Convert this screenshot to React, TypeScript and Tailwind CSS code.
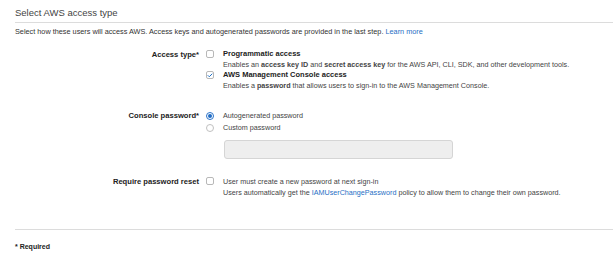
import { Check } from "lucide-react";

const font = { fontFamily: '"Liberation Sans", Arial, sans-serif' };

const CheckBox = ({ checked }: { checked?: boolean }) => (
  <div className="mt-[1px] flex h-[8px] w-[8px] shrink-0 items-center justify-center rounded-[2px] border border-[#b8b8b8] bg-white">
    {checked && <Check className="h-[7px] w-[7px] text-[#1f6fc5]" strokeWidth={4} />}
  </div>
);

const Radio = ({ checked }: { checked?: boolean }) => (
  <div
    className={`flex h-[8px] w-[8px] shrink-0 items-center justify-center rounded-full border ${
      checked ? "border-[#2a73c9]" : "border-[#c0c0c0]"
    } bg-white`}
  >
    {checked && <div className="h-[4px] w-[4px] rounded-full bg-[#1e6bc4]" />}
  </div>
);

const Row = ({ label, children, className = "" }: { label: string; children: React.ReactNode; className?: string }) => (
  <div className={`flex ${className}`}>
    <div className="w-[191px] shrink-0 pr-[7px] text-right text-[7.6px] font-bold leading-[11px] text-[#222]">{label}</div>
    <div className="flex-1">{children}</div>
  </div>
);

export default function App() {
  return (
    <div className="h-[261px] w-[613px] overflow-hidden bg-white pl-[15px] text-[#333]" style={font}>
      {/* Header */}
      <div className="border-b border-[#dcdcdc] pt-[7px] pb-[4px] text-[9.5px] leading-[11px] text-[#444]">
        Select AWS access type
      </div>
      <div className="mt-[4px] text-[7.3px] leading-[9px] text-[#333]">
        Select how these users will access AWS. Access keys and autogenerated passwords are provided in the last step.{" "}
        <span className="text-[#1f6fc5]">Learn more</span>
      </div>

      {/* Access type */}
      <Row label="Access type*" className="mt-[13px]">
        <div className="flex gap-[9px]">
          <CheckBox />
          <div className="text-[7.5px] leading-[10.5px]">
            <div className="font-bold text-[#222]">Programmatic access</div>
            <div className="text-[7.2px] text-[#444]">
              Enables an <b>access key ID</b> and <b>secret access key</b> for the AWS API, CLI, SDK, and other development tools.
            </div>
          </div>
        </div>
        <div className="flex gap-[9px]">
          <CheckBox checked />
          <div className="text-[7.5px] leading-[10.5px]">
            <div className="font-bold text-[#222]">AWS Management Console access</div>
            <div className="text-[7.2px] text-[#444]">
              Enables a <b>password</b> that allows users to sign-in to the AWS Management Console.
            </div>
          </div>
        </div>
      </Row>

      {/* Console password */}
      <Row label="Console password*" className="mt-[19px]">
        <div className="flex items-center gap-[9px] text-[7.2px] leading-[12px] text-[#444]">
          <Radio checked />
          Autogenerated password
        </div>
        <div className="flex items-center gap-[9px] text-[7.2px] leading-[12px] text-[#444]">
          <Radio />
          Custom password
        </div>
        <div className="ml-[18px] mt-[6px] h-[19px] w-[229px] rounded-[3px] border border-[#d5d5d5] bg-[#eeeeee]" />
      </Row>

      {/* Require password reset */}
      <Row label="Require password reset" className="mt-[17px]">
        <div className="flex gap-[9px]">
          <CheckBox />
          <div className="text-[7.2px] leading-[11px] text-[#444]">
            <div>User must create a new password at next sign-in</div>
            <div>
              Users automatically get the <span className="text-[#1f6fc5]">IAMUserChangePassword</span> policy to allow them to change their own password.
            </div>
          </div>
        </div>
      </Row>

      <div className="mt-[31px] border-t border-[#dcdcdc]" />
      <div className="mt-[12px] text-[7px] font-bold text-[#222]">* Required</div>
    </div>
  );
}
